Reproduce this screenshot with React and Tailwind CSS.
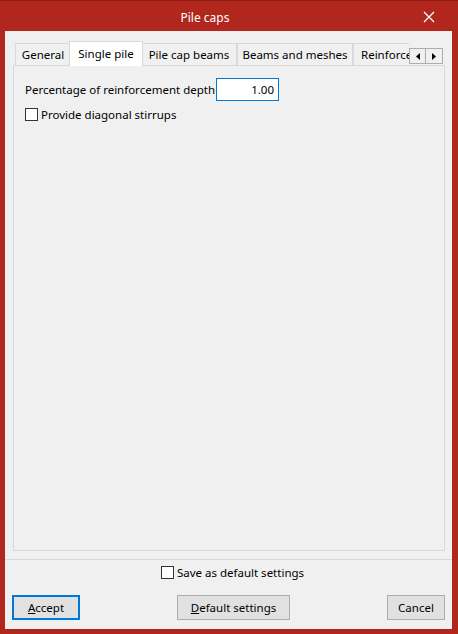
import React from 'react';

const font = { fontFamily: '"Segoe UI", "Noto Sans", "Open Sans", sans-serif' };

function Checkbox({ label }) {
  return (
    <label className="flex items-center gap-[3px] text-[11.5px] text-black whitespace-nowrap">
      <span className="w-[13px] h-[13px] border border-[#333333] bg-white shrink-0" />
      <span className="leading-none">{label}</span>
    </label>
  );
}

function Tab({ label, width, selected }) {
  if (selected) {
    return (
      <div
        className="relative z-10 -mx-[2px] h-[25px] self-start bg-white border border-b-0 border-[#d9d9d9] flex items-center justify-center whitespace-nowrap text-[11.5px] text-black"
        style={{ width: width + 4 }}
      >
        {label}
      </div>
    );
  }
  return (
    <div
      className="h-[22px] pt-[1px] bg-[#f0f0f0] border border-b-0 border-[#d9d9d9] flex items-center justify-center overflow-hidden whitespace-nowrap text-[11.5px] text-black"
      style={{ width }}
    >
      {label}
    </div>
  );
}

export default function App() {
  return (
    <div className="w-[458px] h-[634px] bg-[#b1271d] flex flex-col border-t border-[#8e1a12]" style={font}>
      {/* title bar */}
      <div className="h-[30px] flex items-center relative shrink-0">
        <div className="flex-1 text-center text-white text-[12px] pr-[48px] pt-[3px]">Pile caps</div>
        <svg className="absolute left-[423px] top-[10px]" width="12" height="12" viewBox="0 0 12 12">
          <path d="M1 1 L11 11 M11 1 L1 11" stroke="#ffffff" strokeWidth="1.3" />
        </svg>
      </div>

      {/* body */}
      <div className="ml-[5px] mr-[6px] mb-[5px] flex-1 bg-[#f0f0f0] flex flex-col">
        {/* tabs */}
        <div className="pt-[10px] pl-[8px] pr-[7px] flex flex-col">
          <div className="h-[24px] flex items-end pl-[2px] relative">
            <Tab label="General" width={56} />
            <Tab label="Single pile" width={70} selected />
            <Tab label="Pile cap beams" width={96} />
            <Tab label="Beams and meshes" width={116} />
            <div className="h-[22px] pt-[1px] w-[56px] bg-[#f0f0f0] border border-b-0 border-r-0 border-[#d9d9d9] overflow-hidden whitespace-nowrap text-[11.5px] text-black pl-[7px] flex items-center">
              Reinforcement
            </div>
            <div className="absolute right-[2px] top-[7px] flex">
              <div className="w-[17px] h-[16px] border border-[#adadad] bg-[#f0f0f0] flex items-center justify-center">
                <svg width="4" height="7" viewBox="0 0 4 7"><path d="M4 0 L0 3.5 L4 7 Z" fill="#000" /></svg>
              </div>
              <div className="w-[17px] h-[16px] border border-l-0 border-[#adadad] bg-[#f0f0f0] flex items-center justify-center">
                <svg width="4" height="7" viewBox="0 0 4 7"><path d="M0 0 L4 3.5 L0 7 Z" fill="#000" /></svg>
              </div>
            </div>
          </div>

          {/* panel */}
          <div className="h-[486px] border border-[#d9d9d9] bg-[#f0f0f0] px-[11px] pt-[12px]">
            <div className="flex items-center">
              <span className="text-[11.5px] text-black w-[191px] whitespace-nowrap">Percentage of reinforcement depth</span>
              <div className="w-[63px] h-[23px] bg-white border border-[#0078d7] flex items-center justify-end pr-[4px] text-[11.5px] text-black">
                1.00
              </div>
            </div>
            <div className="mt-[7px]">
              <Checkbox label="Provide diagonal stirrups" />
            </div>
          </div>
        </div>

        {/* footer */}
        <div className="mt-[8px] border-t border-[#d9d9d9] flex-1 flex flex-col">
          <div className="flex justify-center pt-[6px] pl-[8px]">
            <Checkbox label="Save as default settings" />
          </div>
          <div className="mt-[16px] px-[7px] flex justify-between">
            <button className="w-[68px] h-[25px] border-2 border-[#0078d7] bg-[#e1e1e1] text-[11.5px] text-black">
              <span className="underline">A</span>ccept
            </button>
            <button className="w-[113px] h-[25px] border border-[#adadad] bg-[#e1e1e1] text-[11.5px] text-black">
              <span className="underline">D</span>efault settings
            </button>
            <button className="w-[58px] h-[25px] border border-[#adadad] bg-[#e1e1e1] text-[11.5px] text-black">
              Cancel
            </button>
          </div>
        </div>
      </div>
    </div>
  );
}
